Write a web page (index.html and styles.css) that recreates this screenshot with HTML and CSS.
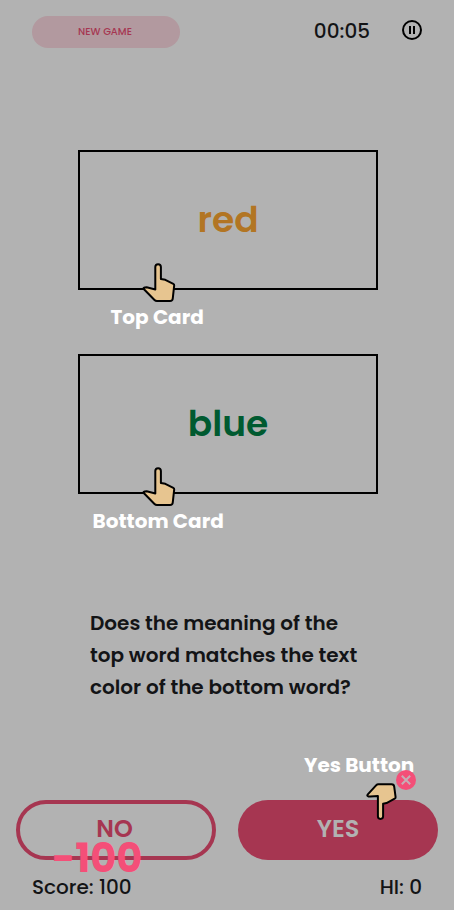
FILE: index.html
```
<!DOCTYPE html>
<html lang="en">
<head>
<meta charset="utf-8">
<meta name="viewport" content="width=device-width, initial-scale=1">
<title>Color Match</title>
<link rel="stylesheet" href="styles.css">
</head>
<body>
<svg width="0" height="0" class="defs" aria-hidden="true">
  <symbol id="hand" viewBox="0 0 34 40">
    <path d="M13.3 27.5V5a2.8 2.8 0 0 1 5.6 0v12l4.4.8 8 4q1 .5.9 1.5L30.8 36.2q-.2 2.8-2.8 2.8H15q-1.5 0-2.5-1L2 27.3q-1.3-1.6.7-1.9l2-.1z"/>
  </symbol>
</svg>
<main class="game">
  <header class="topbar">
    <button class="new-game"><span>NEW GAME</span></button>
    <div class="status">
      <span class="timer">00:05</span>
      <svg class="pause" viewBox="0 0 20 20"><circle cx="10" cy="10" r="9"/><path d="M8 6v8M12 6v8"/></svg>
    </div>
  </header>
  <section class="cards">
    <div class="card">
      <span class="word red">red</span>
      <svg class="hand"><use href="#hand"/></svg>
      <span class="hint top-hint">Top Card</span>
    </div>
    <div class="card">
      <span class="word blue">blue</span>
      <svg class="hand"><use href="#hand"/></svg>
      <span class="hint bottom-hint">Bottom Card</span>
    </div>
  </section>
  <p class="question"><span>Does the meaning of the</span><span>top word matches the text</span><span>color of the bottom word?</span></p>
  <div class="answers">
    <button class="answer no"><span>NO</span></button>
    <button class="answer yes"><span>YES</span></button>
    <span class="hint yes-hint">Yes Button</span>
    <svg class="hand hand-down" viewBox="0 0 32 38">
      <path d="M11.9 14V34.3a2.6 2.6 0 0 0 5.2 0V21.8l3.4-.7 8.2-4.4q1-.6.9-1.6L28.2 4.6q-.3-2.4-2.6-2.4H12.3q-1.2 0-2 .9L1.8 12.4q-1.3 1.6.7 2l1.8.1z"/>
    </svg>
    <svg class="close" viewBox="0 0 20 20"><circle cx="10" cy="10" r="10"/><path d="M5.8 5.8l8.4 8.4M14.2 5.8l-8.4 8.4"/></svg>
    <span class="penalty">-100</span>
  </div>
  <footer class="scores"><span class="score">Score: 100</span><span class="high">HI: 0</span></footer>
</main>
</body>
</html>
```
FILE: styles.css
```
* { box-sizing: border-box; }
body { margin: 0; background: #b2b2b2; color: #131416; font-family: Poppins, Inter, sans-serif; }
button { font: inherit; padding: 0; border: 0; }
.defs { position: absolute; }
.game { width: 454px; height: 910px; overflow: hidden; display: flex; flex-direction: column; position: relative; white-space: nowrap; }
.topbar { height: 150px; padding: 16px 32px 0; display: flex; justify-content: space-between; align-items: flex-start; }
.new-game { width: 148px; height: 32px; border-radius: 16px; background: #b2999f; color: #a63651; font-size: 10px; font-weight: 500; padding: 0 2px 0 0; line-height: 32px; }
.status { display: flex; gap: 32px; }
.timer { font-size: 20px; line-height: 30px; font-weight: 500; }
.pause { width: 20px; height: 20px; margin-top: 4px; fill: none; stroke: #000; stroke-width: 2; }
.cards { display: flex; flex-direction: column; gap: 64px; margin-left: 78px; }
.card { width: 300px; height: 140px; border: 2px solid #000; position: relative; display: flex; align-items: center; justify-content: center; }
.word { font-size: 36px; line-height: 54px; font-weight: 600; }
.red { color: #b27523; }
.blue { color: #005a30; }
.hand { position: absolute; left: 62px; top: 110px; width: 34px; height: 40px; fill: #e7c590; stroke: #000; stroke-width: 2; stroke-linejoin: round; }
.hint { position: absolute; color: #fff; font-size: 20px; font-weight: 700; line-height: 30px; }
.top-hint { left: 30.5px; top: 150px; }
.bottom-hint { left: 12.5px; top: 150px; }
.question { margin: 113px 0 0 90px; font-size: 20px; line-height: 32px; font-weight: 600; }
.question span { display: block; width: max-content; }
.answers { position: relative; display: flex; gap: 22px; margin: 97px 16px 0; }
.answer { width: 200px; height: 60px; border-radius: 30px; font-size: 24px; font-weight: 600; line-height: 1; padding-bottom: 2px; }
.no { background: transparent; border: 4px solid #a63651; color: #a63651; padding-right: 3px; }
.yes { background: #a63651; color: #b2b2b2; }
.yes-hint { left: 288px; top: -50px; }
.hand-down { left: 350px; top: -18px; width: 32px; height: 38px; }
.close { position: absolute; left: 380px; top: -30px; width: 20px; height: 20px; fill: #f44f78; }
.close path { stroke: #c5aeb6; stroke-width: 2; }
.penalty { position: absolute; left: 36px; top: 28px; color: #f44f78; font-size: 40px; font-weight: 700; line-height: 60px; }
.scores { display: flex; justify-content: space-between; margin: 12px 32px 0; font-size: 20px; line-height: 30px; font-weight: 500; }
```
